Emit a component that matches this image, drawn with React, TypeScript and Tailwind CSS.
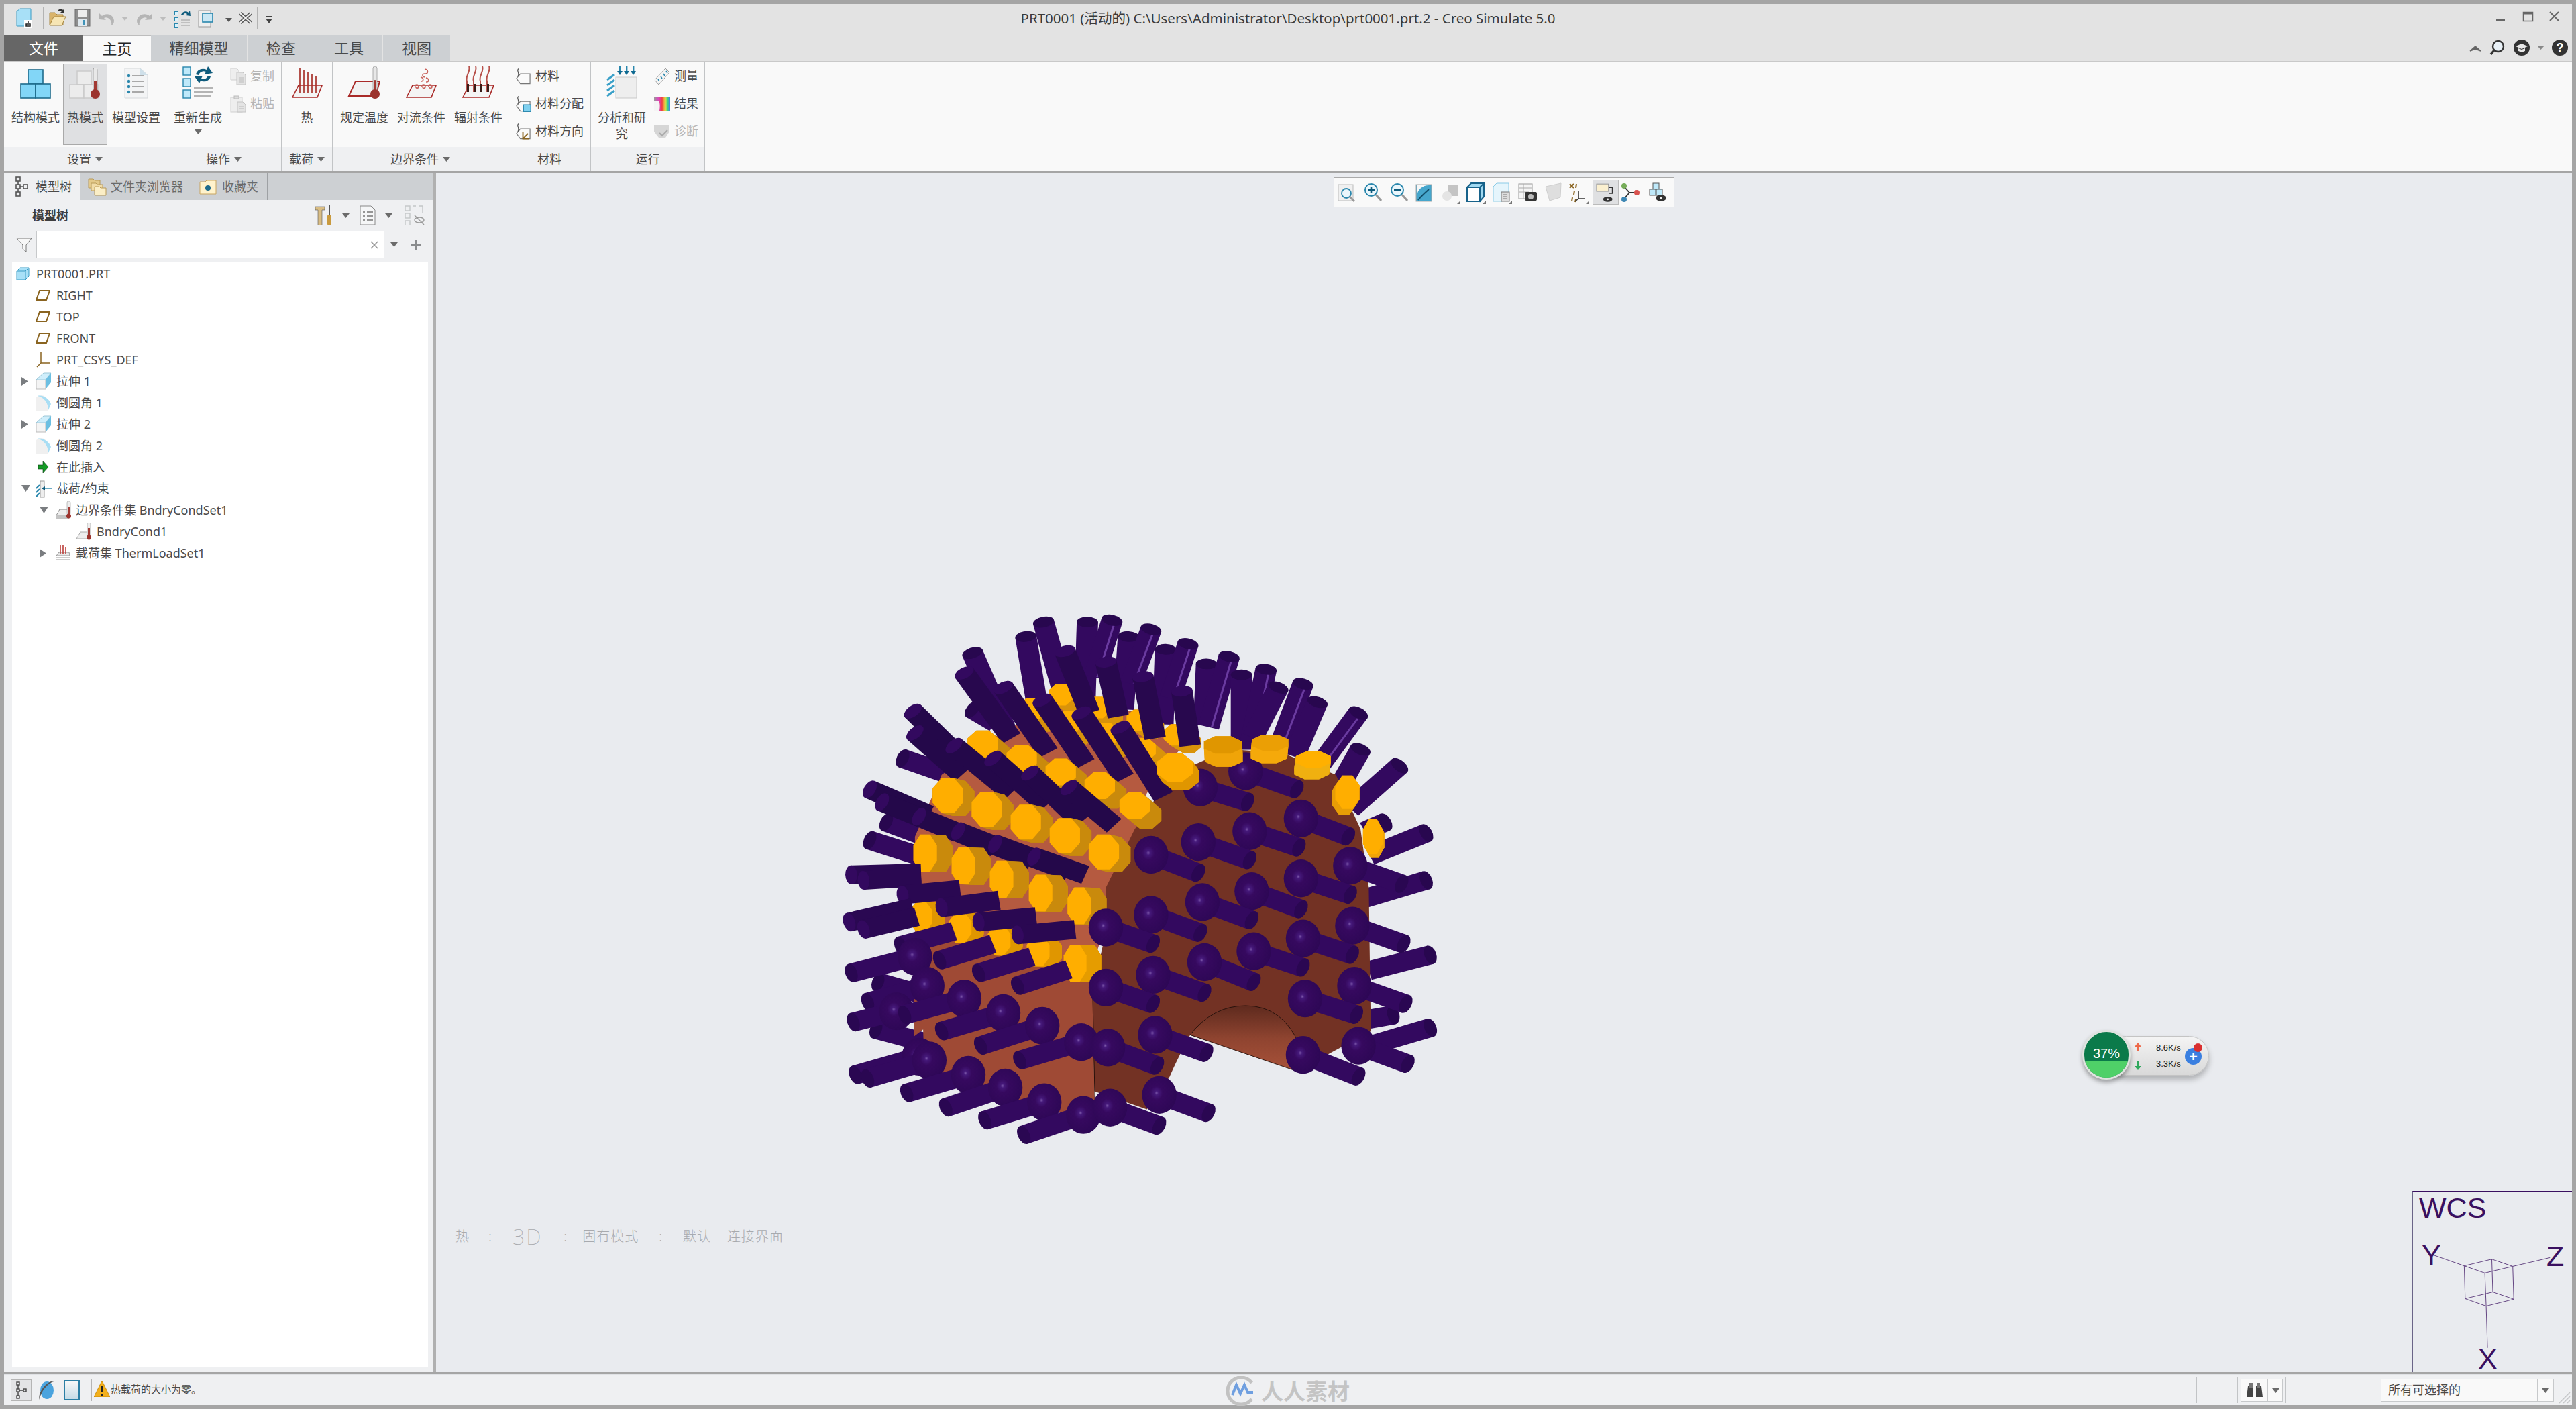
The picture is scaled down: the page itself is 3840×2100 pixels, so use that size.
import React from 'react';

type P = [number, number];

/* ---------- small shared drawings ---------- */

const Caret = ({ className = '' }: { className?: string }) => (
  <svg width="11" height="7" viewBox="0 0 11 7" className={className}>
    <polygon points="0,0 11,0 5.5,7" fill="#6b6b6b" />
  </svg>
);

const RightArrow = () => (
  <svg width="10" height="13" viewBox="0 0 10 13">
    <polygon points="0,0 10,6.5 0,13" fill="#7a7d80" />
  </svg>
);

const DownArrow = () => (
  <svg width="13" height="10" viewBox="0 0 13 10">
    <polygon points="0,0 13,0 6.5,10" fill="#7a7d80" />
  </svg>
);

const Thermo = ({ x, y, h = 44 }: { x: number; y: number; h?: number }) => (
  <g>
    <rect x={x - 3} y={y} width="6" height={h - 8} rx="3" fill="#e8e8e8" stroke="#999" strokeWidth="0.8" />
    <rect x={x - 2} y={y + h * 0.42} width="4" height={h * 0.5} fill="#a33a34" />
    <circle cx={x} cy={y + h - 7} r="7" fill="#9c332d" />
  </g>
);

const Plate = ({ d = 'M2,44 L12,22 L48,22 L42,44 Z' }: { d?: string }) => (
  <path d={d} fill="#f2f2f2" stroke="#a92a28" strokeWidth="2" />
);

/* ---------- ribbon icons ---------- */

const BlocksIcon = () => (
  <svg width="46" height="44" viewBox="0 0 46 44">
    <g fill="#82d6f7" stroke="#1f6c8c" strokeWidth="1.6">
      <rect x="12" y="1" width="22" height="21" />
      <rect x="1" y="22" width="22" height="21" />
      <rect x="23" y="22" width="22" height="21" />
    </g>
  </svg>
);

const HotIcon = () => (
  <svg width="48" height="46" viewBox="0 0 48 46">
    <g fill="#ececec" stroke="#c9c9c9" strokeWidth="1.4">
      <rect x="12" y="5" width="21" height="20" />
      <rect x="1" y="25" width="21" height="20" />
      <rect x="22" y="25" width="21" height="20" />
    </g>
    <Thermo x={39} y={0} h={46} />
  </svg>
);

const SetupIcon = () => (
  <svg width="36" height="46" viewBox="0 0 36 46">
    <path d="M1,1 L24,1 L35,11 L35,45 L1,45 Z" fill="#f3f4f5" stroke="#d5d8da" />
    <path d="M24,1 L24,11 L35,11 Z" fill="#cfe0ea" />
    {[12, 20, 28, 36].map((y) => (
      <g key={y}>
        <circle cx="7" cy={y} r="2.2" fill="#2a87ad" />
        <rect x="12" y={y - 1} width="18" height="2" fill="#a9a9a9" />
      </g>
    ))}
  </svg>
);

const RegenIcon = () => (
  <svg width="46" height="50" viewBox="0 0 46 50">
    <g fill="#bfe9fa" stroke="#2a87ad" strokeWidth="1.4">
      <rect x="1" y="3" width="11" height="12" />
      <rect x="1" y="20" width="11" height="12" />
      <rect x="1" y="37" width="11" height="12" />
    </g>
    <path d="M20,14 C22,6 30,4 36,7 L38,2 L45,12 L33,14 L35,10 C30,8 26,10 24,15 Z" fill="#0f5b7c" />
    <path d="M42,17 C40,24 32,26 27,23 L25,27 L18,17 L30,16 L28,20 C33,22 36,20 38,16 Z" fill="#0f5b7c" />
    <g fill="#b4b4b4">
      <rect x="17" y="32" width="28" height="3" />
      <rect x="17" y="38" width="28" height="3" />
      <rect x="17" y="44" width="25" height="3" />
    </g>
  </svg>
);

const CopyIcon = () => (
  <svg width="24" height="26" viewBox="0 0 24 26">
    <path d="M1,1 L10,1 L13,4 L13,18 L1,18 Z" fill="#eee" stroke="#cfcfcf" />
    <path d="M10,7 L19,7 L23,11 L23,25 L10,25 Z" fill="#e4e4e4" stroke="#c4c4c4" />
    <path d="M13,15 H20 M13,18 H20 M13,21 H20" stroke="#bbb" />
  </svg>
);

const PasteIcon = () => (
  <svg width="24" height="26" viewBox="0 0 24 26">
    <rect x="1" y="3" width="17" height="22" fill="#eee" stroke="#cfcfcf" />
    <rect x="6" y="1" width="7" height="4" fill="#ddd" stroke="#bbb" />
    <path d="M11,10 L19,10 L23,14 L23,25 L11,25 Z" fill="#e4e4e4" stroke="#c4c4c4" />
    <path d="M14,17 H20 M14,20 H20" stroke="#bbb" />
  </svg>
);

const HeatIcon = () => (
  <svg width="46" height="46" viewBox="0 0 46 46">
    <path d="M1,44 L10,26 L45,26 L38,44 Z" fill="#f4f4f4" stroke="#a92a28" strokeWidth="1.6" />
    {[11, 17, 23, 29, 35].map((x, i) => (
      <rect key={x} x={x} y={i * 3 + 1} width="3" height={37 - i * 3} fill="#a8322c" opacity="0.85" />
    ))}
  </svg>
);

const PrescribedIcon = () => (
  <svg width="50" height="48" viewBox="0 0 50 48">
    <Plate />
    <Thermo x={41} y={0} h={48} />
  </svg>
);

const ConvectIcon = () => (
  <svg width="46" height="46" viewBox="0 0 46 46">
    <path d="M1,44 L10,26 L45,26 L38,44 Z" fill="#f4f4f4" stroke="#a92a28" strokeWidth="1.6" />
    <g fill="none" stroke="#c9625c" strokeWidth="1.6">
      <path d="M28,2 C34,3 34,9 28,9 C24,9 24,13 28,14" />
      <path d="M22,14 C27,15 27,20 22,20" />
      <path d="M30,15 C35,16 35,21 30,21" />
      <path d="M14,28 C13,24 19,24 19,28 C19,31 15,31 15,29" />
      <path d="M24,28 C23,24 29,24 29,28 C29,31 25,31 25,29" />
      <path d="M34,28 C33,24 39,24 39,28 C39,31 35,31 35,29" />
    </g>
  </svg>
);

const RadiateIcon = () => (
  <svg width="48" height="48" viewBox="0 0 48 48">
    <path d="M1,46 L10,28 L47,28 L40,46 Z" fill="#f4f4f4" stroke="#a92a28" strokeWidth="1.6" />
    {[13, 23, 33, 43].map((x) => (
      <path key={x} d={`M${x - 3},0 C${x},8 ${x - 9},14 ${x - 6},22 L${x - 6},38`} fill="none" stroke="#b8524c" strokeWidth="2" />
    ))}
    {[7, 17, 27, 37].map((x) => (
      <rect key={x} x={x} y="26" width="3" height="12" fill="#3a1c18" />
    ))}
  </svg>
);

const TagIcon = ({ extra }: { extra?: React.ReactNode }) => (
  <svg width="25" height="26" viewBox="0 0 25 26">
    <path d="M8,9 L23,9 L23,24 L8,24 L2,16 Z" fill="#fafafa" stroke="#777" strokeWidth="1.2" />
    <path d="M5,1 C1,5 8,7 4,13" fill="none" stroke="#555" strokeWidth="1.2" />
    {extra}
  </svg>
);

const StudyIcon = () => (
  <svg width="46" height="50" viewBox="0 0 46 50">
    <rect x="14" y="18" width="31" height="31" fill="#eeeeee" stroke="#c9c9c9" />
    {[22, 30, 38, 46].map((y) => (
      <path key={y} d={`M1,${y} L12,${y - 8}`} stroke="#3aa0c8" strokeWidth="3" />
    ))}
    {[20, 30, 40].map((x) => (
      <g key={x}>
        <rect x={x - 1} y="1" width="2.4" height="10" fill="#2a87ad" />
        <polygon points={`${x - 4},9 ${x + 4},9 ${x},15`} fill="#0f6a91" />
      </g>
    ))}
  </svg>
);

const RulerIcon = () => (
  <svg width="24" height="26" viewBox="0 0 24 26">
    <polygon points="1,18 17,1 23,7 7,25" fill="#f4f4f4" stroke="#9a9a9a" />
    <path d="M6,17 l2,3 M10,13 l2,3 M14,9 l2,3 M18,5 l2,3" stroke="#2a87ad" strokeWidth="1.5" />
  </svg>
);

const ResultIcon = () => (
  <svg width="24" height="20" viewBox="0 0 24 20">
    <defs>
      <linearGradient id="rainbow" x1="0" x2="1">
        <stop offset="0" stopColor="#9a9a9a" />
        <stop offset="0.3" stopColor="#e040c0" />
        <stop offset="0.5" stopColor="#f04040" />
        <stop offset="0.7" stopColor="#f0e040" />
        <stop offset="0.85" stopColor="#40d080" />
        <stop offset="1" stopColor="#4080f0" />
      </linearGradient>
    </defs>
    <rect x="0" y="0" width="24" height="20" fill="url(#rainbow)" />
    <path d="M0,5 H6 C9,7 9,13 8,20 H0 Z" fill="#f4f4f4" />
  </svg>
);

const DiagnoseIcon = () => (
  <svg width="24" height="20" viewBox="0 0 24 20">
    <path d="M0,1 H23 V10 L17,19 H7 L0,10 Z" fill="#d6d6d6" />
    <path d="M8,12 L12,16 L20,8" fill="none" stroke="#aaa" strokeWidth="2" />
  </svg>
);

/* ---------- ribbon parts ---------- */

const BigBtn = ({ icon, label, width, extra, active }: { icon: React.ReactNode; label: string; width: string; extra?: React.ReactNode; active?: boolean }) => (
  <div className={`flex flex-col items-center my-[3px] pt-[9px] border ${active ? 'bg-[#dfe0e2] border-[#a9a9a9]' : 'border-transparent'} ${width}`}>
    <div className="h-[42px] flex items-end justify-center">{icon}</div>
    <div className="mt-[16px] text-center leading-[24px] w-[72px] text-[#4a4a4a]">{label}</div>
    {extra}
  </div>
);

const SmallBtn = ({ icon, label, dim }: { icon: React.ReactNode; label: string; dim?: boolean }) => (
  <div className={`flex items-center h-[41px] gap-[6px] ${dim ? 'text-[#b5b5b5]' : 'text-[#4a4a4a]'}`}>
    <div className="w-[24px] flex justify-center">{icon}</div>
    <span className="whitespace-nowrap">{label}</span>
  </div>
);

const Group = ({ width, label, caret, children }: { width: string; label: string; caret?: boolean; children: React.ReactNode }) => (
  <div className={`flex flex-col shrink-0 border-r border-[#c2c4c6] ${width}`}>
    <div className="flex h-[127px] bg-[#f9f9f9]">{children}</div>
    <div className="flex h-[36px] items-center justify-center gap-[6px] bg-[#eff0f2] text-[#4a4a4a]">
      {label}
      {caret && <Caret />}
    </div>
  </div>
);

const Ribbon = () => (
  <div className="flex h-[163px] shrink-0 bg-[#f9f9f9] border-b-0">
    <Group width="w-[242px]" label="设置" caret>
      <div className="pl-[8px] w-[88px] shrink-0"><BigBtn icon={<BlocksIcon />} label="结构模式" width="w-[78px]" /></div>
      <BigBtn icon={<HotIcon />} label="热模式" width="w-[66px]" active />
      <BigBtn icon={<SetupIcon />} label="模型设置" width="w-[86px]" />
    </Group>
    <Group width="w-[172px]" label="操作" caret>
      <div className="pl-[11px] w-[84px] shrink-0">
        <BigBtn icon={<RegenIcon />} label="重新生成" width="w-[72px]" extra={<Caret className="mt-[6px]" />} />
      </div>
      <div className="pt-[1px] ml-[11px]">
        <SmallBtn icon={<CopyIcon />} label="复制" dim />
        <SmallBtn icon={<PasteIcon />} label="粘贴" dim />
      </div>
    </Group>
    <Group width="w-[76px]" label="载荷" caret>
      <BigBtn icon={<HeatIcon />} label="热" width="w-full" />
    </Group>
    <Group width="w-[262px]" label="边界条件" caret>
      <div className="flex pl-[11px] gap-[13px]">
        <BigBtn icon={<PrescribedIcon />} label="规定温度" width="w-[72px]" />
        <BigBtn icon={<ConvectIcon />} label="对流条件" width="w-[72px]" />
        <BigBtn icon={<RadiateIcon />} label="辐射条件" width="w-[72px]" />
      </div>
    </Group>
    <Group width="w-[123px]" label="材料">
      <div className="pl-[10px] pt-[1px]">
        <SmallBtn icon={<TagIcon />} label="材料" />
        <SmallBtn icon={<TagIcon extra={<rect x="13" y="14" width="11" height="11" fill="#7fd0ef" stroke="#2a87ad" />} />} label="材料分配" />
        <SmallBtn icon={<TagIcon extra={<path d="M12,14 V24 H22 M12,24 L20,16" stroke="#8a6420" strokeWidth="2" fill="none" />} />} label="材料方向" />
      </div>
    </Group>
    <Group width="w-[170px]" label="运行">
      <div className="pl-[10px] w-[84px] shrink-0"><BigBtn icon={<StudyIcon />} label="分析和研究" width="w-[72px]" /></div>
      <div className="pt-[1px] ml-[10px]">
        <SmallBtn icon={<RulerIcon />} label="测量" />
        <SmallBtn icon={<ResultIcon />} label="结果" />
        <SmallBtn icon={<DiagnoseIcon />} label="诊断" dim />
      </div>
    </Group>
    <div className="flex-1 bg-[#f9f9f9]" />
  </div>
);

/* ---------- title bar ---------- */

const QuickBar = () => (
  <div className="flex items-center h-[46px] shrink-0 bg-[#e3e3e3] text-[#333]">
    <div className="flex-1 flex items-center">
      <svg width="400" height="40" viewBox="0 0 400 40" className="-mt-[5px]">
        {/* part */}
        <path d="M19,10 L24,6 L40,6 L40,32 L19,32 Z" fill="#a8e0f7" stroke="#3b9cc4" />
        <rect x="30" y="23" width="11" height="11" fill="#fff" />
        <path d="M33,32 h6 v-3 h-6 z M36,28 v-3" stroke="#222" strokeWidth="1.5" fill="none" />
        <rect x="58" y="4" width="1" height="32" fill="#b3b3b3" />
        {/* open */}
        <path d="M68,30 V12 H76 L79,15 H88 V30 Z" fill="#d9b36a" stroke="#a8873f" />
        <path d="M68,31 L74,18 H92 L86,31 Z" fill="#f6e5b4" stroke="#a8873f" />
        <path d="M80,9 C83,6 86,6 88,8 L90,6 V12 H84 L86,10 C84,9 83,9 82,10 Z" fill="#333" />
        {/* save */}
        <rect x="106" y="7" width="22" height="25" fill="#8e8e8e" stroke="#6f6f6f" />
        <rect x="110" y="8" width="14" height="11" fill="#ededed" />
        <rect x="111" y="22" width="12" height="10" fill="#dfe8ee" />
        <rect x="117" y="23" width="4" height="8" fill="#3f93b8" />
        {/* undo / redo */}
        <path d="M142,22 V13 L146,17 C152,12 163,14 164,24 C164,28 162,30 160,31 C162,23 154,17 149,20 L152,23 Z" fill="#b5b5b5" />
        <polygon points="175,18 185,18 180,24" fill="#bdbdbd" />
        <path d="M221,22 V13 L217,17 C211,12 200,14 198,24 C198,28 200,30 202,31 C200,23 208,17 213,20 L210,23 Z" fill="#b5b5b5" />
        <polygon points="232,18 242,18 237,24" fill="#bdbdbd" />
        {/* regen */}
        <g fill="#d9f1fb" stroke="#2a87ad">
          <rect x="254.5" y="10.5" width="5" height="5" />
          <rect x="254.5" y="19.5" width="5" height="5" />
          <rect x="254.5" y="28.5" width="5" height="5" />
        </g>
        <path d="M264,15 C266,10 272,9 275,12 L277,9 L278,17 L271,16 L273,14 C270,12 268,13 267,16 Z" fill="#0f5b7c" />
        <path d="M264,23 H277 M264,27 H277 M264,31 H277" stroke="#b5b5b5" strokeWidth="1.6" />
        {/* windows */}
        <rect x="290" y="9" width="18" height="24" fill="#eee" stroke="#999" />
        <rect x="296" y="13" width="15" height="13" fill="#cbe7f4" stroke="#2a87ad" strokeWidth="1.6" />
        <polygon points="330,20 340,20 335,26" fill="#555" />
        {/* close */}
        <path d="M352,20 L368,34 M368,20 L352,34" transform="translate(0,-7)" stroke="#555" strokeWidth="5" />
        <path d="M352,20 L368,34 M368,20 L352,34" transform="translate(0,-7)" stroke="#f3f3f3" strokeWidth="2" />
        <rect x="377" y="4" width="1" height="32" fill="#b3b3b3" />
        <rect x="390" y="17" width="10" height="2" fill="#444" />
        <polygon points="390,21 400,21 395,28" fill="#444" />
      </svg>
    </div>
    <div className="text-[20.5px] whitespace-nowrap text-[#3a3a3a] -mt-[4px]">PRT0001 (活动的) C:\Users\Administrator\Desktop\prt0001.prt.2 - Creo Simulate 5.0</div>
    <div className="flex-1 flex justify-end items-center">
      <svg width="120" height="24" viewBox="0 0 120 24" className="-mt-[6px]">
        <rect x="7" y="15" width="13" height="2.5" fill="#666" />
        <rect x="47.5" y="4.5" width="14" height="13" fill="none" stroke="#666" strokeWidth="1.5" />
        <rect x="47.5" y="4.5" width="14" height="3" fill="#666" />
        <path d="M87,4 L100,17 M100,4 L87,17" stroke="#666" strokeWidth="2" />
      </svg>
    </div>
  </div>
);

const TabRow = () => {
  const tabs: [string, string][] = [['精细模型', 'w-[144px]'], ['检查', 'w-[101px]'], ['工具', 'w-[101px]'], ['视图', 'w-[101px]']];
  return (
    <div className="flex h-[40px] shrink-0 bg-[#e3e3e3] border-b border-[#c9c9c9] text-[22px]">
      <div className="w-[118px] bg-[#666666] text-white flex items-center justify-center">文件</div>
      <div className="w-[101px] bg-[#f9f9f9] border-t border-[#bdbdbd] text-[#222] flex items-center justify-center">主页</div>
      {tabs.map(([name, w]) => (
        <div key={name} className={`${w} bg-[#cdd0d3] border-r border-[#e3e3e3] text-[#4a4a4a] flex items-center justify-center`}>{name}</div>
      ))}
      <div className="flex-1 flex justify-end items-center">
        <svg width="156" height="32" viewBox="0 0 156 32">
          <path d="M4,20 L12,13 L20,20 L12,17 Z" fill="#666" stroke="#666" strokeWidth="1.5" />
          <circle cx="46" cy="13" r="8" fill="#e8f0f6" stroke="#333" strokeWidth="2.4" />
          <path d="M40,19 L35,25" stroke="#333" strokeWidth="3.4" />
          <circle cx="81" cy="15" r="12" fill="#333" />
          <path d="M72,13 L81,9 L90,13 L81,17 Z M76,16 V20 L81,22 L86,20 V16 L81,18 Z" fill="#e8e8e8" />
          <polygon points="104,12 115,12 109.500,18" fill="#888" />
          <circle cx="138" cy="15" r="12" fill="#333" />
          <text x="138" y="21" textAnchor="middle" fontSize="18" fontWeight="700" fill="#fff" fontFamily="Liberation Sans">?</text>
        </svg>
      </div>
    </div>
  );
};

/* ---------- model tree ---------- */

const TreeGlyph = () => (
  <svg width="20" height="30" viewBox="0 0 20 30" fill="none" stroke="#555" strokeWidth="1.6">
    <rect x="2" y="1" width="6" height="6" />
    <rect x="2" y="12" width="6" height="6" />
    <rect x="2" y="23" width="6" height="6" />
    <rect x="13" y="12" width="6" height="6" />
    <path d="M5,7 V12 M5,18 V23 M8,15 H13" />
  </svg>
);

const Folder = ({ star }: { star?: boolean }) =>
  star ? (
    <svg width="26" height="24" viewBox="0 0 26 24">
      <path d="M1,5 H9 L11,3 H25 V23 H1 Z" fill="#fff3cc" stroke="#c9a560" />
      <circle cx="13" cy="14" r="4" fill="#1f6c8c" />
    </svg>
  ) : (
    <svg width="28" height="28" viewBox="0 0 28 28">
      <path d="M1,6 V3 H8 L10,5 H18 V16 H1 Z" fill="#e3c98a" stroke="#b89a58" />
      <path d="M5,13 V9 H12 L14,11 H22 V20 H5 Z" fill="#f1dca8" stroke="#b89a58" />
      <path d="M10,17 V14 H17 L19,16 H27 V27 H10 Z" fill="#fbeec6" stroke="#b89a58" />
    </svg>
  );

const PartIcon = () => (
  <svg width="20" height="20" viewBox="0 0 20 20">
    <path d="M1,6 L6,1 L19,1 L19,14 L14,19 L1,19 Z" fill="#a8e0f7" stroke="#3b9cc4" />
    <path d="M14,6 L19,1 M14,6 V19 M1,6 H14" stroke="#3b9cc4" fill="none" />
  </svg>
);

const PlaneIcon = () => (
  <svg width="22" height="16" viewBox="0 0 22 16">
    <path d="M1,15 L6,1 L21,1 L16,15 Z" fill="none" stroke="#8a6420" strokeWidth="2" />
  </svg>
);

const CsysIcon = () => (
  <svg width="24" height="26" viewBox="0 0 24 26" fill="none" stroke="#8a6420" strokeWidth="1.5">
    <path d="M8,2 V18 H22 M8,18 L2,24" />
  </svg>
);

const ExtrudeIcon = () => (
  <svg width="24" height="26" viewBox="0 0 24 26">
    <rect x="1" y="11" width="14" height="14" fill="#f4f4f4" stroke="#bbb" />
    <path d="M1,11 L12,1 H23 L15,11 Z" fill="#cfeefb" stroke="#9cc7d8" />
    <path d="M15,11 L23,1 V15 L15,25 Z" fill="#6cbfe2" />
  </svg>
);

const RoundIcon = () => (
  <svg width="24" height="26" viewBox="0 0 24 26">
    <path d="M1,25 V5 C6,1 12,1 15,5 C18,8 19,12 19,25 Z" fill="#f0f0f0" />
    <path d="M3,3 C9,1 20,6 23,15 L19,24 C19,14 13,5 3,3 Z" fill="#a9def4" />
  </svg>
);

const InsertIcon = () => (
  <svg width="16" height="20" viewBox="0 0 16 20" className="ml-[4px]">
    <path d="M0,7 H7 V1 L15,10 L7,19 V13 H0 Z" fill="#149a25" stroke="#0a3a10" strokeWidth="0.6" />
  </svg>
);

const LoadsIcon = () => (
  <svg width="24" height="28" viewBox="0 0 24 28">
    <rect x="7" y="3" width="6" height="24" fill="#eee" stroke="#999" />
    <path d="M1,14 L6,9 M1,20 L6,15 M1,26 L6,21" stroke="#2a87ad" strokeWidth="2" />
    <path d="M10,14 H24" stroke="#2a87ad" strokeWidth="1.4" />
    <polygon points="9,14 14,11 14,17" fill="#0f5b7c" />
  </svg>
);

const SmallThermo = () => (
  <g>
    <rect x="17" y="0" width="5" height="20" rx="2" fill="#eee" stroke="#999" strokeWidth="0.6" />
    <rect x="18" y="8" width="3" height="14" fill="#a33a34" />
    <circle cx="19.500" cy="22" r="3.500" fill="#9c332d" />
  </g>
);

const BcSetIcon = () => (
  <svg width="24" height="26" viewBox="0 0 24 26">
    <path d="M1,21 L6,12 H20 V21 Z" fill="#eee" stroke="#888" />
    <path d="M1,25 H20 M1,23 H20" stroke="#888" />
    <SmallThermo />
  </svg>
);

const BcIcon = () => (
  <svg width="24" height="26" viewBox="0 0 24 26">
    <path d="M1,24 L7,14 H20 V24 Z" fill="#eee" stroke="#aaa" />
    <SmallThermo />
  </svg>
);

const LoadSetIcon = () => (
  <svg width="22" height="24" viewBox="0 0 22 24">
    <path d="M1,16 L5,11 H20 L21,16 Z M1,19 H21 M1,22 H21" fill="#e8e8e8" stroke="#999" />
    <path d="M7,1 V14 M11,1 V14 M15,4 V14" stroke="#b8322c" strokeWidth="1.5" />
  </svg>
);

type RowT = { d: 0 | 1 | 2 | 3; arrow?: 'r' | 'd'; icon: React.ReactNode; text: string };

const rows: RowT[] = [
  { d: 0, icon: <PartIcon />, text: 'PRT0001.PRT' },
  { d: 1, icon: <PlaneIcon />, text: 'RIGHT' },
  { d: 1, icon: <PlaneIcon />, text: 'TOP' },
  { d: 1, icon: <PlaneIcon />, text: 'FRONT' },
  { d: 1, icon: <CsysIcon />, text: 'PRT_CSYS_DEF' },
  { d: 1, arrow: 'r', icon: <ExtrudeIcon />, text: '拉伸 1' },
  { d: 1, icon: <RoundIcon />, text: '倒圆角 1' },
  { d: 1, arrow: 'r', icon: <ExtrudeIcon />, text: '拉伸 2' },
  { d: 1, icon: <RoundIcon />, text: '倒圆角 2' },
  { d: 1, icon: <InsertIcon />, text: '在此插入' },
  { d: 1, arrow: 'd', icon: <LoadsIcon />, text: '载荷/约束' },
  { d: 2, arrow: 'd', icon: <BcSetIcon />, text: '边界条件集 BndryCondSet1' },
  { d: 3, icon: <BcIcon />, text: 'BndryCond1' },
  { d: 2, arrow: 'r', icon: <LoadSetIcon />, text: '载荷集 ThermLoadSet1' },
];

const TreeRow = ({ r }: { r: RowT }) => {
  const pad = ['pl-[6px]', 'pl-[14px]', 'pl-[41px]', 'pl-[95px]'][r.d];
  const slot = r.d === 1 ? 'w-[21px]' : r.d === 2 ? 'w-[24px]' : 'w-0';
  const icon = ['w-[20px] mr-[10px]', 'w-[24px] mr-[7px]', 'w-[24px] mr-[6px]', 'w-[24px] mr-[7px]'][r.d];
  return (
    <div className={`flex items-center h-[32px] whitespace-nowrap ${pad}`}>
      <div className={`${slot} flex`}>{r.arrow === 'r' ? <RightArrow /> : r.arrow === 'd' ? <DownArrow /> : null}</div>
      <div className={`${icon} flex items-center`}>{r.icon}</div>
      <span className="text-[#4a4a4a]">{r.text}</span>
    </div>
  );
};

const ModelTree = () => (
  <div className="w-[640px] shrink-0 flex flex-col bg-[#eff0f2]">
    <div className="flex h-[40px] shrink-0 bg-[#cdd0d3]">
      <div className="w-[113px] bg-[#eff0f2] flex items-center gap-[11px] pl-[16px] text-[#4a4a4a]">
        <TreeGlyph />
        模型树
      </div>
      <div className="w-[166px] border-x border-[#9ea1a4] flex items-center gap-[6px] pl-[11px] text-[#6a6a6a]">
        <Folder />
        文件夹浏览器
      </div>
      <div className="w-[114px] border-r border-[#9ea1a4] flex items-center gap-[8px] pl-[12px] text-[#6a6a6a]">
        <Folder star />
        收藏夹
      </div>
    </div>
    <div className="flex items-center h-[46px] shrink-0 pl-[42px]">
      <span className="font-bold text-[#3e3e3e]">模型树</span>
      <div className="ml-auto flex items-center pr-[13px]">
        <svg width="25" height="30" viewBox="0 0 25 30">
          <path d="M0,2 H14 V7 H10 V30 H4 V7 H0 Z" fill="#d9bd84" stroke="#555" strokeWidth="0.6" />
          <rect x="20" y="0" width="2" height="14" fill="#555" />
          <rect x="18" y="14" width="6" height="16" rx="2" fill="#c99a3e" />
        </svg>
        <Caret className="ml-[15px]" />
        <svg width="24" height="30" viewBox="0 0 24 30" className="ml-[15px]">
          <path d="M1,1 H17 L23,7 V29 H1 Z" fill="#f5f6f7" stroke="#888" />
          <path d="M5,10 h3 M11,10 H20 M5,16 h3 M11,16 H20 M5,22 h3 M11,22 H20" stroke="#777" strokeWidth="1.4" />
        </svg>
        <Caret className="ml-[14px]" />
        <svg width="30" height="30" viewBox="0 0 30 30" className="ml-[18px]" fill="none" stroke="#c4c6c8" strokeWidth="1.4">
          <rect x="1" y="1" width="7" height="7" />
          <rect x="1" y="12" width="7" height="7" />
          <rect x="1" y="23" width="7" height="7" />
          <path d="M13,1 h4 M21,1 h6 V12" />
          <ellipse cx="22" cy="22" rx="7" ry="4" stroke="#999" />
          <path d="M15,15 L29,29" stroke="#999" />
        </svg>
      </div>
    </div>
    <div className="flex items-center h-[41px] shrink-0 pl-[18px]">
      <svg width="24" height="22" viewBox="0 0 24 22" className="mr-[6px]">
        <path d="M1,1 H23 L15,11 V21 L10,17 V11 Z" fill="#f7f7f7" stroke="#777" />
      </svg>
      <div className="w-[519px] h-[41px] bg-white border border-[#c7c9cb] flex items-center justify-end pr-[8px]">
        <svg width="12" height="12" viewBox="0 0 12 12">
          <path d="M1,1 L11,11 M11,1 L1,11" stroke="#999" strokeWidth="1.6" />
        </svg>
      </div>
      <Caret className="ml-[9px]" />
      <svg width="16" height="16" viewBox="0 0 16 16" className="ml-[19px]">
        <path d="M6,0 H10 V6 H16 V10 H10 V16 H6 V10 H0 V6 H6 Z" fill="#8a8c8e" />
      </svg>
    </div>
    <div className="h-[5px] shrink-0" />
    <div className="flex-1 ml-[12px] mr-[8px] mb-[8px] bg-white border-t border-[#d4d6d8] pt-[1px]">
      {rows.map((r, i) => (
        <TreeRow key={i} r={r} />
      ))}
    </div>
  </div>
);

/* ---------- viewport toolbar ---------- */

const Corner = () => <polygon points="33,31 33,36 28,36" fill="#777" />;

const viewIcons: React.ReactNode[] = [
  <g key="fit"><rect x="5" y="7" width="22" height="24" fill="#f0f0f0" stroke="#bbb" /><circle cx="17" cy="20" r="7" fill="#eaf6fc" stroke="#2a87ad" strokeWidth="1.8" /><path d="M22,25 L29,32" stroke="#999" strokeWidth="3" /></g>,
  <g key="in"><circle cx="16" cy="15" r="9" fill="#eaf6fc" stroke="#2a87ad" strokeWidth="2" /><path d="M11,15 H21 M16,10 V20" stroke="#0f5b7c" strokeWidth="2.6" /><path d="M23,22 L31,31" stroke="#999" strokeWidth="3" /></g>,
  <g key="out"><circle cx="16" cy="15" r="9" fill="#eaf6fc" stroke="#2a87ad" strokeWidth="2" /><path d="M11,15 H21" stroke="#0f5b7c" strokeWidth="2.6" /><path d="M23,22 L31,31" stroke="#999" strokeWidth="3" /></g>,
  <g key="repaint"><rect x="6" y="7" width="23" height="25" fill="#46a6cc" stroke="#aaa" /><path d="M7,24 C8,14 16,8 25,8 L7,8 Z" fill="#f7f7f7" /><path d="M9,30 C12,26 16,22 25,14" stroke="#124f6b" strokeWidth="2" /></g>,
  <g key="shade"><rect x="14" y="8" width="15" height="16" fill="#c4c4c4" /><circle cx="13" cy="24" r="7" fill="#e4e4e4" /><Corner /></g>,
  <g key="cube"><path d="M5,11 L11,5 H30 V25 L24,32 Z" fill="#9fd8f0" stroke="#17628a" strokeWidth="2" /><rect x="5" y="11" width="19" height="21" fill="#fff" stroke="#17628a" strokeWidth="2" /><path d="M24,11 L30,5" stroke="#17628a" strokeWidth="2" /><Corner /></g>,
  <g key="saved"><path d="M5,10 L10,5 H28 V20 H18 V32 H5 Z" fill="#e5f5fc" stroke="#8ccbe6" /><rect x="17" y="18" width="12" height="14" fill="#ddd" stroke="#777" /><path d="M20,22 H26 M20,25 H26 M20,28 H26" stroke="#777" /><Corner /></g>,
  <g key="cam"><rect x="5" y="6" width="20" height="22" fill="#f4f4f4" stroke="#999" /><path d="M5,12 H25 M5,18 H20 M12,6 V28" stroke="#aaa" /><rect x="14" y="18" width="18" height="13" rx="2" fill="#333" /><circle cx="23" cy="25" r="4" fill="#bbb" /></g>,
  <g key="faded"><path d="M6,10 L29,5 L28,26 L12,31 Z" fill="#dedede" stroke="#cfcfcf" /></g>,
  <g key="datum"><path d="M4,6 L10,12 M10,6 L4,12" stroke="#8a6420" strokeWidth="2" /><path d="M14,6 L13,12 M11,16 L10,22 M8,26 L7,32 M13,29 L12,33" stroke="#8a6420" strokeWidth="2" /><path d="M17,16 V28 H27 M17,28 L12,32" fill="none" stroke="#333" strokeWidth="1.6" /><Corner /></g>,
  <g key="active"><rect x="5" y="6" width="18" height="11" fill="#fbf0d0" stroke="#999" /><path d="M24,11 H29 V20 M24,20 H30" stroke="#333" strokeWidth="1.6" fill="none" /><ellipse cx="22" cy="29" rx="7" ry="4" fill="#333" /><circle cx="22" cy="29" r="1.5" fill="#eee" /></g>,
  <g key="node"><path d="M8,10 L16,19 L8,28 M16,19 H27" stroke="#333" strokeWidth="1.8" fill="none" /><circle cx="8" cy="9" r="4" fill="#77ad5a" /><circle cx="8" cy="29" r="4" fill="#3d86b3" /><circle cx="27" cy="19" r="4" fill="#d9534f" /></g>,
  <g key="blocks"><g fill="#bfe9fa" stroke="#555"><rect x="12" y="5" width="9" height="9" /><rect x="7" y="14" width="9" height="9" /><rect x="17" y="14" width="9" height="9" /></g><ellipse cx="24" cy="27" rx="8" ry="4.500" fill="#333" /><circle cx="24" cy="27" r="1.6" fill="#eee" /></g>,
];

const ViewToolbar = () => (
  <div className="absolute left-[1338px] top-[6px] flex items-center h-[45px] w-[508px] bg-[#f9f9f9] border border-[#aaaaaa]">
    {viewIcons.map((ic, i) => (
      <div key={i} className={`w-[38.5px] h-[37px] flex items-center justify-center ${i === 10 ? 'bg-[#dfe0e2] border border-[#bbb]' : ''}`}>
        <svg width="37" height="37" viewBox="0 0 37 37">{ic}</svg>
      </div>
    ))}
  </div>
);

/* ---------- 3D model ---------- */

const BACK: [P, P, number?][] = [
  [[375, 135], [450, 330]], [[505, 90], [530, 260]], [[548, 50], [590, 220]], [[655, 50], [650, 230]],
  [[715, 45], [680, 170], 1], [[755, 90], [745, 250]], [[810, 70], [770, 190], 1], [[845, 125], [840, 290]],
  [[900, 110], [865, 230], 1], [[945, 165], [940, 300]], [[1000, 145], [960, 300], 1], [[1030, 195], [1030, 360]],
  [[1090, 180], [1060, 340], 1], [[1120, 230], [1070, 340]], [[1180, 220], [1130, 370], 1], [[1215, 270], [1170, 390]],
  [[1315, 300], [1230, 430], 1], [[1320, 400], [1280, 480]], [[1415, 445], [1320, 540]], [[1380, 600], [1340, 620]],
  [[1480, 630], [1370, 680]], [[1480, 760], [1360, 800]], [[1490, 965], [1370, 1000]], [[1490, 1165], [1370, 1205]],
  [[1400, 1130], [1350, 1140]], [[205, 425], [320, 470]], [[165, 600], [260, 640]], [[125, 650], [250, 695]],
  [[375, 290], [420, 320]], [[145, 1040], [240, 1070]], [[140, 1170], [240, 1200]],
];

const STEEP: [P, P][] = [
  [[355, 190], [470, 370]], [[450, 230], [560, 410]], [[545, 265], [650, 440]], [[600, 130], [660, 300]],
  [[700, 160], [730, 310]], [[640, 300], [745, 480]], [[790, 200], [820, 370]], [[885, 240], [905, 390]], [[735, 340], [840, 530]],
];

const DIAG: [P, P][] = [
  [[230, 295], [370, 450]], [[235, 355], [350, 470]], [[330, 390], [470, 520]], [[425, 425], [555, 555]],
  [[515, 465], [640, 600]], [[610, 505], [720, 610]],
];

const LONG: [P, P][] = [
  [[125, 510], [270, 580]], [[155, 545], [340, 630]], [[245, 585], [430, 670]], [[340, 625], [520, 705]],
  [[430, 660], [610, 735]], [[525, 695], [650, 745]],
];

const FLAT: [P, P][] = [
  [[80, 745], [250, 740]], [[110, 760], [250, 750]], [[205, 800], [345, 785]], [[300, 835], [440, 815]],
  [[390, 875], [530, 860]], [[485, 910], [625, 895]], [[75, 875], [230, 835]], [[110, 895], [240, 860]],
];

const LEFT: [P, P][] = [
  [[200, 940], [330, 900]], [[295, 980], [425, 935]], [[390, 1015], [520, 970]], [[485, 1050], [610, 1005]],
  [[80, 1015], [235, 970]], [[120, 1095], [265, 1050]], [[85, 1150], [190, 1120]], [[210, 1130], [355, 1085]], [[300, 1175], [450, 1125]],
  [[395, 1215], [545, 1160]], [[490, 1255], [640, 1205]], [[90, 1295], [245, 1245]], [[120, 1305], [270, 1255]],
  [[215, 1345], [365, 1295]], [[310, 1385], [455, 1330]], [[405, 1420], [550, 1370]], [[500, 1460], [645, 1405]],
];

const RIGHT: [P, P][] = [
  [[930, 505], [1045, 545]], [[1040, 460], [1165, 510]], [[1175, 590], [1290, 640]], [[1050, 625], [1170, 670]],
  [[925, 655], [1050, 705]], [[810, 690], [925, 740]], [[1295, 720], [1420, 770]], [[1175, 755], [1295, 800]],
  [[1055, 790], [1175, 840]], [[935, 820], [1055, 870]], [[810, 855], [930, 905]], [[700, 890], [815, 935]],
  [[1300, 885], [1425, 935]], [[1180, 920], [1300, 965]], [[1060, 955], [1180, 1000]], [[940, 985], [1060, 1040]],
  [[815, 1020], [940, 1070]], [[1305, 1050], [1430, 1100]], [[1185, 1085], [1310, 1130]], [[700, 1055], [815, 1100]],
  [[820, 1185], [945, 1235]], [[705, 1220], [825, 1270]], [[1180, 1240], [1315, 1300]], [[1315, 1215], [1435, 1265]],
  [[830, 1350], [950, 1400]], [[710, 1385], [830, 1435]],
];

const Rod = ({ a, b, w = 52, fill = '#33095f', tip = '#28074f', shine }: { a: P; b: P; w?: number; fill?: string; tip?: string; shine?: boolean }) => {
  const deg = (Math.atan2(b[1] - a[1], b[0] - a[0]) * 180) / Math.PI;
  return (
    <g>
      <line x1={a[0]} y1={a[1]} x2={b[0]} y2={b[1]} stroke={fill} strokeWidth={w} />
      {shine && <line x1={a[0] + 8} y1={a[1]} x2={b[0] + 8} y2={b[1]} stroke="#6a3ba0" strokeWidth={5} />}
      {/* flat end of the cylinder, seen at an angle */}
      <ellipse cx={a[0]} cy={a[1]} rx={w * 0.28} ry={w / 2} fill={tip} transform={`rotate(${deg} ${a[0]} ${a[1]})`} />
    </g>
  );
};

const Dome = ({ at }: { at: P }) => <ellipse cx={at[0]} cy={at[1]} rx={42} ry={52} fill="url(#dome)" />;

// base dome on a face, rod sticks out towards the tip
const Pin = ({ base, tip }: { base: P; tip: P }) => (
  <g>
    <Rod a={tip} b={base} fill="#33095f" tip="#2a0752" />
    <Dome at={base} />
  </g>
);

const octagon = (x: number, y: number, rx: number, ry: number): P[] =>
  [0, 1, 2, 3, 4, 5, 6, 7].map((i) => {
    const t = (Math.PI / 4) * i + Math.PI / 8;
    return [x + rx * Math.cos(t), y + ry * Math.sin(t)] as P;
  });

const Cyl = ({ x, y, rx, ry, dx, dy, side = '#c98a0c', face = '#ffae00' }: { x: number; y: number; rx: number; ry: number; dx: number; dy: number; side?: string; face?: string }) => {
  const pts = octagon(x, y, rx, ry);
  return (
    <g fill={side}>
      {pts.map((p, i) => {
        const q = pts[(i + 1) % 8];
        return <polygon key={i} points={`${p[0]},${p[1]} ${q[0]},${q[1]} ${q[0] + dx},${q[1] + dy} ${p[0] + dx},${p[1] + dy}`} />;
      })}
      <polygon points={pts.map((p) => `${p[0] + dx},${p[1] + dy}`).join(' ')} />
      <polygon points={pts.map((p) => p.join(',')).join(' ')} fill={face} />
    </g>
  );
};

const Model = () => (
  <svg viewBox="0 0 1568 1568" preserveAspectRatio="none" className="absolute left-[570px] top-[642px] w-[960px] h-[850px]">
    <defs>
      <radialGradient id="dome" cx="0.42" cy="0.45" r="0.6">
        <stop offset="0" stopColor="#7a55a8" />
        <stop offset="0.09" stopColor="#45197a" />
        <stop offset="0.3" stopColor="#36095f" />
        <stop offset="1" stopColor="#2d0755" />
      </radialGradient>
      <linearGradient id="arch" x1="0" y1="0" x2="0" y2="1">
        <stop offset="0" stopColor="#5e2a1e" />
        <stop offset="0.5" stopColor="#8f4430" />
        <stop offset="1" stopColor="#a85239" />
      </linearGradient>
    </defs>

    {BACK.map(([a, b, s], i) => (
      <Rod key={i} a={a} b={[b[0] + (b[0] - a[0]) * 0.25, b[1] + (b[1] - a[1]) * 0.25]} shine={s === 1} />
    ))}

    <polygon points="235,640 300,470 450,350 600,270 800,300 880,400 800,520 770,640 720,760 700,880 660,1020 235,900" fill="#b55a40" />
    <path d="M770,620 L860,470 L1000,400 L1130,410 L1260,470 L1320,620 L1340,780 L1345,1175 L1165,1285 L905,1185 Q870,1260 855,1300 L800,1390 L672,1340 L665,1080 L700,900 L700,780 Z" fill="#733224" />
    <polygon points="235,900 660,1020 668,1090 672,1345 675,1400 610,1405 400,1350 258,1280 255,1170 232,1190 232,1000" fill="#9f4a35" />
    <path d="M905,1185 Q960,1105 1040,1105 Q1130,1105 1170,1210 L1165,1285 Z" fill="url(#arch)" stroke="#1d0d08" strokeWidth="1.5" />
    <line x1="668" y1="1085" x2="674" y2="1400" stroke="#1d0d08" strokeWidth="1.5" />

    {/* far orange rows */}
    {([[590, 250], [680, 285], [780, 320], [870, 360]] as P[]).map((p, i) => <Cyl key={i} x={p[0]} y={p[1]} rx={32} ry={32} dx={32} dy={22} side="#d9930a" />)}
    {([[520, 290], [610, 325], [700, 360], [790, 400]] as P[]).map((p, i) => <Cyl key={i} x={p[0]} y={p[1]} rx={34} ry={34} dx={30} dy={30} side="#d9930a" />)}

    {STEEP.map(([a, b], i) => <Rod key={i} a={a} b={b} fill="#28084e" tip="#33095f" />)}

    {([[400, 385], [495, 425], [590, 462], [685, 500], [770, 555]] as P[]).map((p, i) => <Cyl key={i} x={p[0]} y={p[1]} rx={40} ry={40} dx={28} dy={26} />)}

    {DIAG.map(([a, b], i) => <Rod key={i} a={a} b={b} fill="#24084a" tip="#33095f" />)}

    {([[315, 527], [410, 565], [505, 600], [600, 637], [695, 682]] as P[]).map((p, i) => <Cyl key={i} x={p[0]} y={p[1]} rx={40} ry={52} dx={28} dy={8} />)}

    {LONG.map(([a, b], i) => <Rod key={i} a={a} b={b} fill="#24084a" tip="#33095f" />)}

    {([[260, 685], [353, 720], [446, 757], [541, 795], [635, 830]] as P[]).map((p, i) => <Cyl key={i} x={p[0]} y={p[1]} rx={31} ry={55} dx={38} dy={2} />)}

    {([[250, 860], [345, 890], [440, 925], [535, 955]] as P[]).map((p, i) => <Cyl key={i} x={p[0]} y={p[1]} rx={30} ry={45} dx={30} dy={2} side="#e09600" />)}

    {FLAT.map(([a, b], i) => <Rod key={i} a={a} b={b} fill="#2a0852" tip="#33095f" />)}

    <Cyl x={625} y={988} rx={30} ry={55} dx={36} dy={0} side="#e59c00" />

    {LEFT.map(([tip, base], i) => (
      i < 4 ? <Rod key={i} a={tip} b={base} fill="#33095f" tip="#2a0752" /> : <Pin key={i} base={base} tip={tip} />
    ))}
    {RIGHT.map(([base, tip], i) => <Pin key={i} base={base} tip={tip} />)}

    {/* rim cylinders sit in front of the top pins */}
    <Cyl x={868} y={450} rx={48} ry={42} dx={14} dy={24} side="#e09600" />
    <Cyl x={985} y={388} rx={50} ry={26} dx={2} dy={36} side="#f0a408" face="#e09600" />
    <Cyl x={1100} y={382} rx={48} ry={24} dx={-3} dy={34} side="#f5a90a" face="#eb9f05" />
    <Cyl x={1205} y={428} rx={46} ry={24} dx={-4} dy={32} side="#f0b010" face="#ffb000" />
    <Cyl x={1288} y={518} rx={32} ry={50} dx={-8} dy={16} side="#e89e06" />
    <Cyl x={1350} y={640} rx={26} ry={52} dx={4} dy={10} side="#f0a408" />
  </svg>
);

/* ---------- overlays on the viewport ---------- */

const NetWidget = () => (
  <div className="absolute left-[2454px] top-[1277px] w-[190px] h-[74px]">
    <div className="absolute left-[36px] top-[9px] w-[153px] h-[59px] rounded-[30px] bg-gradient-to-b from-[#f4f4f4] to-[#d9d9d9] border border-[#c4c4c4] shadow-[0_6px_8px_rgba(0,0,0,0.25)]">
      <svg width="12" height="42" viewBox="0 0 12 42" className="absolute left-[40px] top-[9px]">
        <path d="M6,0 L11,6 H8 V13 H4 V6 H1 Z" fill="#ee6a4a" />
        <path d="M6,41 L11,35 H8 V28 H4 V35 H1 Z" fill="#2fa85c" />
      </svg>
      <div className="absolute left-[73px] top-[9px] font-['Liberation_Sans',sans-serif] text-[13px] leading-[16px] text-[#222]">8.6K/s</div>
      <div className="absolute left-[73px] top-[33px] font-['Liberation_Sans',sans-serif] text-[13px] leading-[16px] text-[#222]">3.3K/s</div>
      <div className="absolute left-[116px] top-[17px] w-[25px] h-[25px] rounded-full bg-[#3a7fe0] text-white text-[22px] leading-[23px] text-center font-bold">+</div>
      <div className="absolute left-[129px] top-[10px] w-[13px] h-[13px] rounded-full bg-[#d92f2f]" />
    </div>
    <div className="absolute left-0 top-0 w-[72px] h-[74px] rounded-full border-[3px] border-[#dfe3df] bg-[#0b7a4a] overflow-hidden flex items-center justify-center shadow-[0_4px_6px_rgba(0,0,0,0.35)]">
      <div className="absolute left-0 right-0 bottom-0 h-[25px] bg-[#4fd068]" />
      <span className="relative text-white text-[20px] font-['Liberation_Sans',sans-serif] -mt-[4px]">37%</span>
    </div>
  </div>
);

const WcsBox = () => (
  <div className="absolute right-0 bottom-0 w-[238px] h-[270px] border-l border-t border-l-[#6a6488] border-t-[#3a1060] font-['Liberation_Sans',sans-serif] text-[#3a1060]">
    <svg viewBox="1078 720 478 705" preserveAspectRatio="none" className="absolute inset-0 w-full h-full">
      <g fill="none" stroke="#3a1060" strokeWidth="1" opacity="0.75">
        <path d="M1232,1010 L1315,984 L1378,1012 L1294,1038 Z" vectorEffect="non-scaling-stroke" />
        <path d="M1235,1138 L1318,1112 L1381,1140 L1298,1167 Z" vectorEffect="non-scaling-stroke" />
        <path d="M1232,1010 L1235,1138 M1315,984 L1318,1112 M1378,1012 L1381,1140 M1294,1038 L1298,1167" vectorEffect="non-scaling-stroke" />
        <path d="M1140,968 L1232,1010 M1378,1012 L1490,978 M1298,1167 L1302,1330" vectorEffect="non-scaling-stroke" />
      </g>
    </svg>
    <span className="absolute left-[9px] top-[4px] text-[43px] leading-[40px]">WCS</span>
    <span className="absolute left-[13px] top-[74px] text-[43px] leading-[40px]">Y</span>
    <span className="absolute left-[199px] top-[76px] text-[43px] leading-[40px]">Z</span>
    <span className="absolute left-[97px] top-[231px] text-[43px] leading-[36px]">X</span>
  </div>
);

const ModeText = () => (
  <div className="absolute left-[29px] top-[1569px] flex items-center h-[32px] text-[20px] font-light text-[#a8aaae] whitespace-nowrap tracking-[1px]">
    <span>热</span>
    <span className="ml-[28px]">:</span>
    <span className="ml-[30px] text-[32px] font-['Noto_Sans',sans-serif] font-thin text-[#a8aaae] tracking-[2px]">3D</span>
    <span className="ml-[32px]">:</span>
    <span className="ml-[22px]">固有模式</span>
    <span className="ml-[30px]">:</span>
    <span className="ml-[30px]">默认</span>
    <span className="ml-[24px]">连接界面</span>
  </div>
);

/* ---------- status bar ---------- */

const StatusBar = () => (
  <div className="relative flex items-center h-[46px] shrink-0 bg-[#eff0f2] border-t-2 border-[#e0e2e5]">
    <div className="ml-[10px] w-[31px] h-[32px] bg-[#e3e4e6] border border-[#b5b5b5] flex items-center justify-center">
      <svg width="16" height="26" viewBox="0 0 16 26" fill="none" stroke="#444" strokeWidth="1.4">
        <rect x="1" y="1" width="4" height="4" /><rect x="1" y="11" width="4" height="4" /><rect x="1" y="21" width="4" height="4" /><rect x="11" y="11" width="4" height="4" />
        <path d="M3,5 V11 M3,15 V21 M5,13 H11" />
      </svg>
    </div>
    <svg width="26" height="32" viewBox="0 0 26 32" className="ml-[10px]">
      <ellipse cx="13" cy="16" rx="10" ry="13" fill="#4aa3de" />
      <path d="M2,30 C-2,20 14,0 24,3 C16,4 4,16 2,30 Z" fill="#555" />
    </svg>
    <div className="ml-[12px] w-[24px] h-[30px] bg-gradient-to-b from-[#f5f7f8] to-[#c5dbe6] border-2 border-[#2b7fa5]" />
    <div className="ml-[17px] w-px h-[32px] bg-[#b5b5b5]" />
    <svg width="24" height="24" viewBox="0 0 24 24" className="ml-[3px] -mt-[4px]">
      <polygon points="12,0 24,24 0,24" fill="#f3b01c" stroke="#c98a0c" />
      <rect x="10.500" y="7" width="3" height="10" fill="#222" />
      <rect x="10.500" y="19" width="3" height="3" fill="#222" />
    </svg>
    <span className="ml-[1px] -mt-[4px] text-[15px] text-[#4a4a4a]">热载荷的大小为零。</span>

    {/* watermark */}
    <div className="absolute left-[1822px] top-0 h-[46px] flex items-center gap-[8px]">
      <svg width="44" height="44" viewBox="0 0 44 44">
        <path d="M38,10 A20,20 0 1 0 38,34" fill="none" stroke="#c2c2c2" strokeWidth="5" />
        <path d="M9,28 L15,13 L21,26 L27,13 L32,24 H40" fill="none" stroke="#6f9fe0" strokeWidth="4" />
      </svg>
      <span className="text-[33px] font-bold leading-none text-[#c4c4c4]">人人素材</span>
    </div>

    <div className="ml-auto flex items-center h-full">
      <div className="w-px h-[38px] bg-[#c2c4c6]" />
      <div className="ml-[60px] w-px h-[38px] bg-[#c2c4c6]" />
      <div className="ml-[4px] w-[63px] h-[34px] bg-[#f9f9f9] border border-[#c7c9cb] flex items-center">
        <div className="w-[40px] flex justify-center border-r border-[#c7c9cb] h-full items-center">
          <svg width="26" height="24" viewBox="0 0 26 24">
            <path d="M3,6 H11 V22 H1 Z M15,6 H23 L25,22 H15 Z" fill="#444" />
            <rect x="5" y="1" width="5" height="8" fill="#777" />
            <rect x="16" y="1" width="5" height="8" fill="#777" />
          </svg>
        </div>
        <Caret className="ml-[6px]" />
      </div>
      <div className="ml-[3px] w-px h-[38px] bg-[#c2c4c6]" />
      <div className="ml-[142px] w-[258px] h-[34px] bg-[#f9f9f9] border border-[#c7c9cb] flex items-center pl-[10px] text-[#4a4a4a]">
        <span className="flex-1 -mt-[2px]">所有可选择的</span>
        <div className="w-[24px] h-full border-l border-[#c7c9cb] flex items-center justify-center">
          <Caret />
        </div>
      </div>
      <svg width="27" height="27" viewBox="0 0 27 27" className="self-end">
        <path d="M8,24 L24,8 M14,24 L24,14 M20,24 L24,20" stroke="#c4c6c8" strokeWidth="1.6" />
      </svg>
    </div>
  </div>
);

export default function App() {
  return (
    <div className="w-[3840px] h-[2100px] bg-[#a5a5a5] pt-[6px] px-[6px] pb-[6px] font-['Noto_Sans','Noto_Sans_CJK_SC',sans-serif] text-[18px] overflow-hidden">
      <div className="flex flex-col h-full">
        <QuickBar />
        <TabRow />
        <Ribbon />
        <div className="h-[3px] shrink-0 bg-[#a5a5a5]" />
        <div className="flex flex-1 min-h-0">
          <ModelTree />
          <div className="w-[4px] shrink-0 bg-[#b0b0b0]" />
          <div className="relative flex-1 bg-[#e9ebef] overflow-hidden">
            <ViewToolbar />
            <Model />
            <NetWidget />
            <ModeText />
            <WcsBox />
          </div>
        </div>
        <div className="h-[3px] shrink-0 bg-[#a5a5a5]" />
        <StatusBar />
      </div>
    </div>
  );
}
